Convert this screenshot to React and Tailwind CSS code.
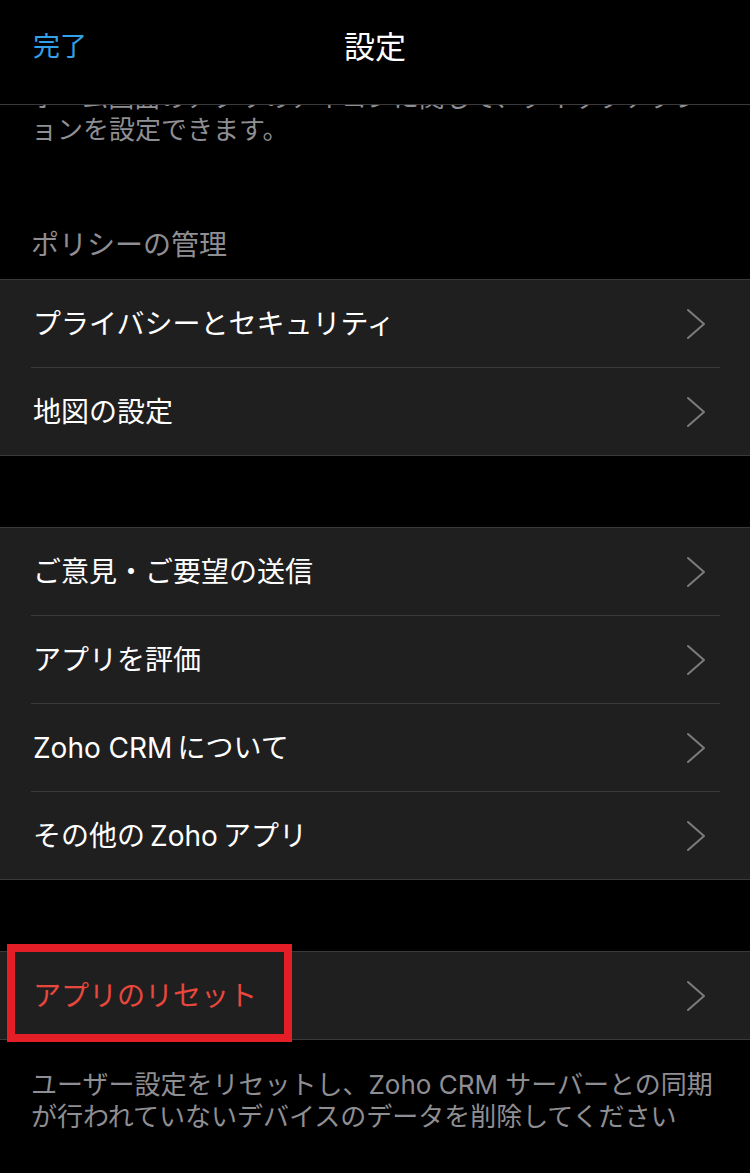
import React from 'react';

const Chevron = () => (
    <svg width="22" height="32" viewBox="0 0 22 32" fill="none" className="shrink-0">
        <path d="M3 2 L19 16 L3 30" stroke="#7c7c80" strokeWidth="2" strokeLinecap="round" strokeLinejoin="round" />
    </svg>
);

const Row = ({ label, danger }) => (
    <div className="flex h-[87px] items-center justify-between pl-[33px] pr-[43px]">
        <span className={`text-[28px] leading-none ${danger ? 'text-[#e8473d]' : 'text-white'}`}>{label}</span>
        <Chevron />
    </div>
);

const Divider = () => <div className="ml-[31px] mr-[30px] h-px bg-[#3a3a3c]" />;

const Group = ({ items, className = '', children }) => (
    <div className={`relative border-y border-[#3a3a3c] bg-[#1f1f1f] ${className}`}>
        {items.map((item, i) => (
            <React.Fragment key={item.label}>
                {i > 0 && <Divider />}
                <Row label={item.label} danger={item.danger} />
            </React.Fragment>
        ))}
        {children}
    </div>
);

const App = () => {
    return (
        <div className="w-[750px] min-h-[1173px] overflow-hidden bg-black font-['Inter','Noto_Sans_CJK_JP',sans-serif]">
            {/* Nav bar, sits over the scrolled content */}
            <header className="relative z-10 grid h-[105px] grid-cols-[1fr_auto_1fr] items-center border-b border-[#3a3a3c] bg-black pb-[9px]">
                <span className="pl-[33px] text-[27px] text-[#33a1e8]">完了</span>
                <h1 className="text-[31px] font-normal text-white">設定</h1>
                <span />
            </header>

            <div className="-mt-[23px]">
                <p className="whitespace-nowrap pl-[31px] text-[26px] leading-[32px] text-[#8e8e93]">
                    ホーム画面のアプリのアイコンに関して、クイックアクシ<br />ョンを設定できます。
                </p>

                <p className="mt-[83px] mb-[18px] pl-[31px] text-[28px] leading-[32px] text-[#8e8e93]">ポリシーの管理</p>

                <Group items={[{ label: 'プライバシーとセキュリティ' }, { label: '地図の設定' }]} />

                <Group
                    className="mt-[71px]"
                    items={[
                        { label: 'ご意見・ご要望の送信' },
                        { label: 'アプリを評価' },
                        { label: 'Zoho CRM\u2009について' },
                        { label: 'その他の\u2009Zoho\u2009アプリ' },
                    ]}
                />

                <Group className="mt-[71px]" items={[{ label: 'アプリのリセット', danger: true }]}>
                    {/* highlight box drawn over the reset row */}
                    <div className="absolute left-[7px] top-[-8px] h-[98px] w-[285px] border-[8px] border-[#e41e26]" />
                </Group>

                <p className="mt-[29px] whitespace-nowrap pl-[31px] text-[26px] leading-[32px] text-[#8e8e93]">
                    ユーザー設定をリセットし、Zoho CRM サーバーとの同期<br />が行われていないデバイスのデータを削除してください
                </p>
            </div>
        </div>
    );
};

export default App;
